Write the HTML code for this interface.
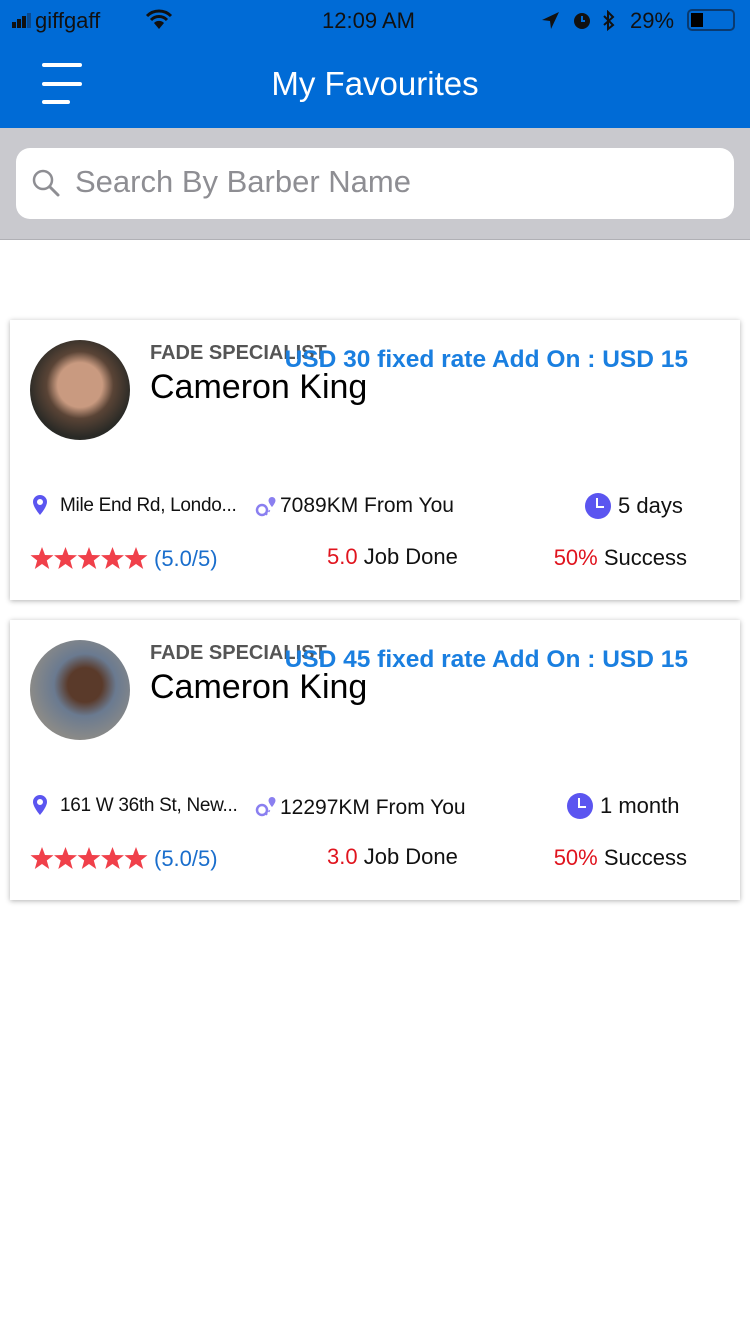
<!DOCTYPE html>
<html><head><meta charset="utf-8"><style>
*{margin:0;padding:0;box-sizing:border-box}
body{width:750px;height:1334px;background:#fff;font-family:"Liberation Sans",sans-serif;position:relative;overflow:hidden}
.a{position:absolute;white-space:nowrap}
.hdr{position:absolute;left:0;top:0;width:750px;height:128px;background:#006bd6}
.card{position:absolute;left:10px;width:730px;height:280px;background:#fff;box-shadow:0 1px 5px rgba(0,0,0,.3)}
.av{position:absolute;left:20px;top:20px;width:100px;height:100px;border-radius:50%;background:radial-gradient(circle at 50% 45%,#c99a80 0 30%,#5a4436 45%,#2a2a26 70%)}
.fs{left:140px;top:22px;font-size:20px;font-weight:bold;color:#555}
.nm{left:140px;top:48px;font-size:34px;color:#000}
.pr{right:52px;top:26px;font-size:24.5px;font-weight:bold;color:#1a7fe0}
.t{font-size:20px;color:#111}
.r{color:#e0141e}
</style></head><body>
<div class="hdr"></div>
<div class="a" style="left:12px;top:8px;font-size:22px;color:#111">
<span style="display:inline-block;width:4px;height:6px;background:#111;margin-right:1px"></span><span style="display:inline-block;width:4px;height:9px;background:#111;margin-right:1px"></span><span style="display:inline-block;width:4px;height:12px;background:#111;margin-right:1px"></span><span style="display:inline-block;width:4px;height:15px;background:#0a4a90;margin-right:4px"></span>giffgaff</div>
<svg class="a" style="left:145px;top:8px" width="28" height="22" viewBox="0 0 28 22"><path d="M2 8 A17 17 0 0 1 26 8" fill="none" stroke="#111" stroke-width="3"/><path d="M6 12 A11 11 0 0 1 22 12" fill="none" stroke="#111" stroke-width="3"/><path d="M14 21 L9 15 A7 7 0 0 1 19 15 Z" fill="#111"/></svg>
<div class="a" style="left:322px;top:8px;font-size:22px;color:#111">12:09 AM</div>
<svg class="a" style="left:540px;top:10px" width="80" height="22" viewBox="0 0 80 22"><path d="M19 2 L2 10 L10 11 L11 19 Z" fill="#111"/><circle cx="42" cy="11" r="8" fill="#111"/><path d="M42 6 V11 H45" stroke="#006bd6" stroke-width="2" fill="none"/><path d="M64 6 L73 15 L68 19 V2 L73 7 L64 15" fill="none" stroke="#111" stroke-width="2"/></svg>
<div class="a" style="left:630px;top:8px;font-size:22px;color:#111">29%</div>
<div class="a" style="left:687px;top:9px;width:48px;height:22px;border:2px solid #0a3a70;border-radius:5px"><div style="margin:2px;width:12px;height:14px;background:#000"></div></div>
<div class="a" style="left:42px;top:63px;width:40px;height:4px;background:#fff;border-radius:2px"></div>
<div class="a" style="left:42px;top:82px;width:40px;height:4px;background:#fff;border-radius:2px"></div>
<div class="a" style="left:42px;top:100px;width:28px;height:4px;background:#fff;border-radius:2px"></div>
<div class="a" style="left:0;width:750px;top:65px;text-align:center;font-size:33px;color:#fff">My Favourites</div>
<div class="a" style="left:0;top:128px;width:750px;height:112px;background:#c9c9ce;border-bottom:1px solid #b0b0b5"></div>
<div class="a" style="left:16px;top:148px;width:718px;height:71px;background:#fff;border-radius:14px"></div>
<svg class="a" style="left:31px;top:168px" width="30" height="30" viewBox="0 0 30 30"><circle cx="12" cy="12" r="9" fill="none" stroke="#8e8e93" stroke-width="2.5"/><path d="M19 19 L27 27" stroke="#8e8e93" stroke-width="3" stroke-linecap="round"/></svg>
<div class="a" style="left:75px;top:164px;font-size:31px;color:#8e8e93">Search By Barber Name</div>

<svg width="0" height="0" style="position:absolute"><defs>
<symbol id="star" viewBox="0 0 24 24"><path d="M12 1 L15 9 L23.5 9.2 L16.8 14.5 L19.2 23 L12 18 L4.8 23 L7.2 14.5 L0.5 9.2 L9 9 Z" fill="#f0404a"/></symbol>
<symbol id="pin" viewBox="0 0 14 20"><path d="M7 0 A7 7 0 0 1 14 7 C14 12 7 20 7 20 C7 20 0 12 0 7 A7 7 0 0 1 7 0 Z M7 4 A3 3 0 1 0 7 10 A3 3 0 1 0 7 4 Z" fill="#5b55f0" fill-rule="evenodd"/></symbol>
<symbol id="dist" viewBox="0 0 22 22"><circle cx="7" cy="14" r="5" fill="none" stroke="#8a7ff0" stroke-width="2.5"/><path d="M17 1 A3.5 3.5 0 0 1 20.5 4.5 C20.5 7 17 11 17 11 C17 11 13.5 7 13.5 4.5 A3.5 3.5 0 0 1 17 1Z" fill="#8a7ff0"/><path d="M11 19 L15 14" stroke="#8a7ff0" stroke-width="1.5" stroke-dasharray="2 2"/></symbol>
<symbol id="clk" viewBox="0 0 28 28"><circle cx="14" cy="14" r="13" fill="#5b55f0"/><path d="M13 6 V15 H20" stroke="#fff" stroke-width="2" fill="none"/></symbol>
</defs></svg>

<div class="card" style="top:320px">
<div class="av"></div>
<div class="a fs">FADE SPECIALIST</div>
<div class="a nm">Cameron King</div>
<div class="a pr">USD 30 fixed rate Add On : USD 15</div>
<svg class="a" style="left:23px;top:175px" width="14" height="20"><use href="#pin"/></svg>
<div class="a t" style="left:50px;top:175px;font-size:19px;letter-spacing:-0.3px">Mile End Rd, Londo...</div>
<svg class="a" style="left:245px;top:176px" width="22" height="22"><use href="#dist"/></svg>
<div class="a t" style="left:270px;top:174px;font-size:21px">7089KM From You</div>
<svg class="a" style="left:574px;top:172px" width="28" height="28"><use href="#clk"/></svg>
<div class="a t" style="left:608px;top:173px;font-size:22px">5 days</div>
<svg class="a" style="left:20px;top:226px" width="118" height="24"><use href="#star" x="0" width="24" height="24"/><use href="#star" x="23.5" width="24" height="24"/><use href="#star" x="47" width="24" height="24"/><use href="#star" x="70.5" width="24" height="24"/><use href="#star" x="94" width="24" height="24"/></svg>
<div class="a" style="left:144px;top:226px;font-size:22px;color:#1a6ecc">(5.0/5)</div>
<div class="a t" style="left:317px;top:224px;font-size:22px"><span class="r">5.0</span> Job Done</div>
<div class="a t" style="right:53px;top:225px;font-size:22px"><span class="r">50%</span> Success</div>
</div>

<div class="card" style="top:620px">
<div class="av" style="background:radial-gradient(circle at 55% 45%,#5a3a2a 0 22%,#6a7a90 40%,#8a8a88 70%)"></div>
<div class="a fs">FADE SPECIALIST</div>
<div class="a nm">Cameron King</div>
<div class="a pr">USD 45 fixed rate Add On : USD 15</div>
<svg class="a" style="left:23px;top:175px" width="14" height="20"><use href="#pin"/></svg>
<div class="a t" style="left:50px;top:175px;font-size:19px;letter-spacing:-0.3px">161 W 36th St, New...</div>
<svg class="a" style="left:245px;top:176px" width="22" height="22"><use href="#dist"/></svg>
<div class="a t" style="left:270px;top:176px;font-size:21px">12297KM From You</div>
<svg class="a" style="left:556px;top:172px" width="28" height="28"><use href="#clk"/></svg>
<div class="a t" style="left:590px;top:173px;font-size:22px">1 month</div>
<svg class="a" style="left:20px;top:226px" width="118" height="24"><use href="#star" x="0" width="24" height="24"/><use href="#star" x="23.5" width="24" height="24"/><use href="#star" x="47" width="24" height="24"/><use href="#star" x="70.5" width="24" height="24"/><use href="#star" x="94" width="24" height="24"/></svg>
<div class="a" style="left:144px;top:226px;font-size:22px;color:#1a6ecc">(5.0/5)</div>
<div class="a t" style="left:317px;top:224px;font-size:22px"><span class="r">3.0</span> Job Done</div>
<div class="a t" style="right:53px;top:225px;font-size:22px"><span class="r">50%</span> Success</div>
</div>
</body></html>
